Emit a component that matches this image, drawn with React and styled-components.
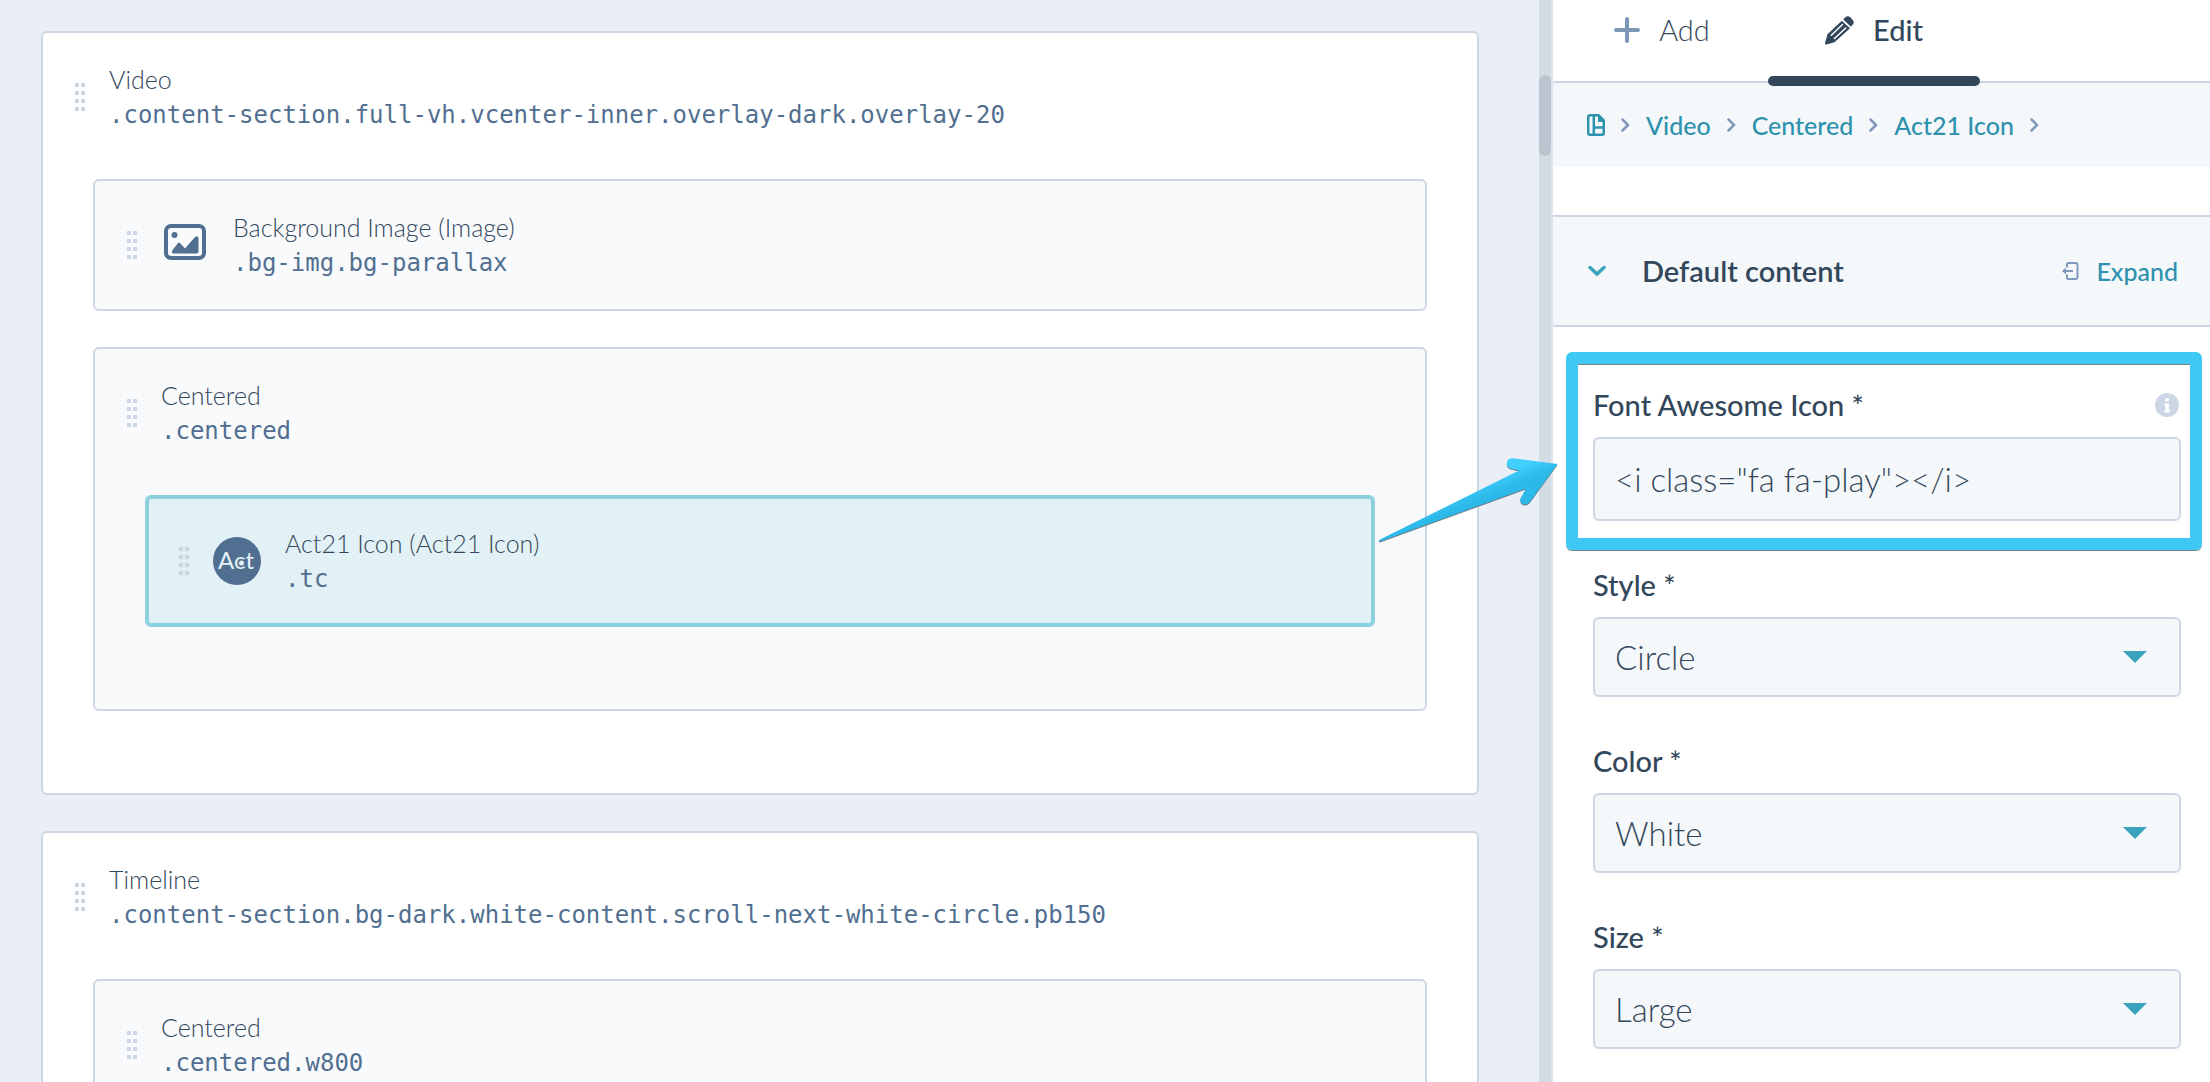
import * as React from 'react';
import styled, { createGlobalStyle } from 'styled-components';

const GlobalStyles = createGlobalStyle`
  * {
    box-sizing: border-box;
  }
  body {
    margin: 0;
    color: #33475b;
    font-family: Lato, 'Open Sans', sans-serif;
    font-size: 25px;
    line-height: 36px;
  }
`;

const PageStyles = styled.div`
  display: grid;
  grid-template-columns: minmax(0, 1fr) 671px;
  height: 100vh;
  overflow: hidden;
  background: #eaeff7;
`;

const Canvas = styled.main`
  display: flex;
  flex-direction: column;
  gap: 36px;
  padding: 31px 60px 31px 41px;
`;

const Card = styled.section`
  flex-shrink: 0;
  border: 2px solid #cdd6e4;
  border-radius: 6px;
  background: ${(p) => (p.$nested ? '#f9fafc' : '#fff')};
`;

const SelectedCard = styled(Card)`
  border-color: #8ad1dd;
  background: #e2f1f5;
  box-shadow: inset 0 0 0 2px #8ad1dd;
`;

const CardHeader = styled.div`
  display: flex;
  align-items: center;
  gap: 24px;
  padding: 28px 32px;
`;

const CardBody = styled.div`
  display: flex;
  flex-direction: column;
  gap: 36px;
  padding: 18px 50px 82px;
`;

const Handle = styled.span`
  display: grid;
  grid-template-columns: 4px 4px;
  grid-auto-rows: 4px;
  gap: 4px 2px;
  cursor: grab;

  i {
    background: #cdd6e4;
  }
`;

const Names = styled.div`
  min-width: 0;

  h2 {
    margin: 0;
    font-size: 25px;
    font-weight: 300;
  }
  code {
    display: block;
    color: #516f90;
    font-family: 'DejaVu Sans Mono', monospace;
    font-size: 24px;
  }
`;

const Sidebar = styled.aside`
  position: relative;
  display: grid;
  grid-template-columns: 14px minmax(0, 1fr);
  background: #fff;
`;

const ScrollTrack = styled.div`
  padding-top: 75px;
  border-right: 2px solid #dee4ee;
  background: #d3dbe3;
`;

const ScrollThumb = styled.div`
  height: 81px;
  border-radius: 6px;
  background: #bcc4cf;
`;

const Tabs = styled.nav`
  display: flex;
  padding-left: 3px;
  border-bottom: 2px solid #cdd6e4;
`;

const Tab = styled.button`
  position: relative;
  display: flex;
  justify-content: center;
  align-items: center;
  gap: 19px;
  width: 212px;
  padding: 12px 0 33px;
  border: 0;
  background: none;
  color: inherit;
  font: inherit;
  font-size: 29px;
  font-weight: ${(p) => (p.$active ? 500 : 300)};

  &::after {
    content: '';
    display: ${(p) => (p.$active ? 'block' : 'none')};
    position: absolute;
    right: 0;
    bottom: -5px;
    left: 0;
    height: 10px;
    border-radius: 5px;
    background: #33475b;
  }
`;

const Breadcrumbs = styled.nav`
  display: flex;
  align-items: center;
  gap: 16px;
  height: 84px;
  padding: 0 34px;
  background: #f5f8fa;
  font-weight: 500;

  a {
    color: #2e91ae;
    text-decoration: none;
  }
  svg {
    display: block;
  }
`;

const SectionHeader = styled.header`
  display: flex;
  align-items: center;
  height: 112px;
  margin-top: 48px;
  padding: 0 32px 0 35px;
  border: solid #cdd6e4;
  border-width: 2px 0;
  background: #f5f8fa;

  h1 {
    flex: 1;
    margin: 0 0 0 36px;
    font-size: 29px;
    font-weight: 600;
  }
`;

const ExpandButton = styled.button`
  display: flex;
  align-items: center;
  gap: 17px;
  padding: 0;
  border: 0;
  background: none;
  color: #2e91ae;
  font: inherit;
  font-weight: 500;
`;

const Fields = styled.form`
  display: flex;
  flex-direction: column;
  gap: 46px;
  padding: 60px 29px 33px 40px;
`;

const Field = styled.div`
  position: relative;
`;

const LabelRow = styled.div`
  display: flex;
  justify-content: space-between;
  align-items: center;
  margin-bottom: 14px;
  padding-right: 2px;
  font-size: 29px;
  font-weight: 500;
`;

const TextInput = styled.input`
  display: block;
  width: 100%;
  height: 84px;
  padding: 0 20px;
  border: 2px solid #cdd6e4;
  border-radius: 6px;
  background: #f5f8fa;
  color: inherit;
  font: inherit;
  font-size: 33px;
  font-weight: 300;
  line-height: 44px;
`;

const SelectWrap = styled.div`
  position: relative;

  svg {
    position: absolute;
    top: 34px;
    right: 34px;
    pointer-events: none;
  }
`;

const Select = styled.select`
  display: block;
  width: 100%;
  height: 80px;
  padding: 0 20px;
  border: 2px solid #cdd6e4;
  border-radius: 6px;
  background: #f5f8fa;
  color: inherit;
  font: inherit;
  font-size: 33px;
  font-weight: 300;
  line-height: 44px;
  appearance: none;
`;

const Highlight = styled.div`
  position: absolute;
  inset: -35px -21px -29px -27px;
  border: 12px solid #40c8f4;
  border-radius: 6px;
  box-shadow: 0 1px 0 #7b8288, inset 0 1px 0 #7b8288;
  pointer-events: none;
`;

const Arrow = styled.svg`
  position: absolute;
  top: 450px;
  left: -164px;
  filter: drop-shadow(0 1px 0 #6d7a84);
  pointer-events: none;
`;

const DragHandle = () => (
  <Handle>
    {Array.from({ length: 8 }, (_, i) => (
      <i key={i} />
    ))}
  </Handle>
);

const ImageIcon = () => (
  <svg width="48" height="48" viewBox="0 0 48 48" fill="#516f90">
    <rect x="5" y="5" width="38" height="32" rx="5" fill="none" stroke="#516f90" strokeWidth="4" />
    <circle cx="13.500" cy="14" r="3" />
    <path d="M11 31.500Q10.500 30 12 28.500L17 22q1-1 2 0l5 5.500L34 16q2.500-2 3.500 1v13q0 2.500-2.500 2.500H12.500Q11.300 32.500 11 31.500z" />
  </svg>
);

const ActIcon = () => (
  <svg width="48" height="48" viewBox="0 0 48 48">
    <circle cx="24" cy="24" r="24" fill="#516f90" />
    <text x="5" y="32" fill="#e2f1f5" fontSize="24">
      Act
    </text>
    <circle cx="28.500" cy="26" r="2.500" fill="#e2f1f5" />
  </svg>
);

const PlusIcon = () => (
  <svg width="26" height="26" viewBox="0 0 26 26" stroke="#7c98b6" strokeWidth="4" strokeLinecap="round">
    <path d="M13 2v22M2 13h22" />
  </svg>
);

const PencilIcon = () => (
  <svg width="29" height="29" viewBox="0 0 29 29" fill="#33475b">
    <path d="M18.200 3.400l2.400-2.300q2.200-1.800 4.400 0l2.800 3q1.800 2.300 0 4.500l-1.900 2.200z" />
    <path d="M16.800 4.700L2.500 18.200 0 27.200q0 1.300 1.300 1.200l8.200-2.200L25 12.300z" />
    <path d="M17.500 8.500L6.300 19.200M20.800 12L9.500 22.500" stroke="#fff" strokeWidth="1.500" strokeLinecap="round" />
  </svg>
);

const PageIcon = () => (
  <svg width="18" height="22" viewBox="0 0 18 22" fill="none" stroke="#2e91ae" strokeWidth="2.500">
    <path d="M3.200 1.200h8.300L16.800 6.500V19q0 1.800-1.800 1.800H3.200q-2 0-2-1.800V3q0-1.800 2-1.800zM6.800 1v20M6.800 13.500H17" />
    <path d="M11 1v7h6.500z" fill="#2e91ae" stroke="none" />
  </svg>
);

const Chevron = () => (
  <svg width="9" height="14" viewBox="0 0 9 14" fill="none" stroke="#8199bc" strokeWidth="2.500" strokeLinecap="round">
    <path d="M1.500 1.500L7 7l-5.500 5.500" />
  </svg>
);

const ChevronDown = () => (
  <svg width="18" height="12" viewBox="0 0 18 12" fill="none" stroke="#3aa3bd" strokeWidth="3.500" strokeLinecap="round">
    <path d="M2 2.500l7 6.500 7-6.500" />
  </svg>
);

const ExpandIcon = () => (
  <svg width="17" height="18" viewBox="0 0 17 18" fill="none" stroke="#8199bc" strokeWidth="2">
    <path d="M5 5.500V2.500Q5 1 6.500 1h7Q15.500 1 15.500 3v12q0 2-2 2h-7Q5 17 5 15.500v-3M11 9H2" />
    <path d="M0 9l4-3.500v7z" fill="#8199bc" stroke="none" />
  </svg>
);

const InfoIcon = () => (
  <svg width="24" height="24" viewBox="0 0 24 24">
    <circle cx="12" cy="12" r="12" fill="#cdd6e4" />
    <path d="M10.300 5h3.600v3.400h-3.600zM9.500 10.500h4.400V17h1v2.500H9.500V17h.9v-4h-.9z" fill="#fff" />
  </svg>
);

const Caret = () => (
  <svg width="24" height="12" viewBox="0 0 24 12" fill="#3aa3bd">
    <path d="M0 0h24L12 12z" />
  </svg>
);

const Header = ({ name, classes, icon }) => (
  <CardHeader>
    <DragHandle />
    {icon}
    <Names>
      <h2>{name}</h2>
      <code>{classes}</code>
    </Names>
  </CardHeader>
);

const SelectField = ({ id, label, value }) => (
  <Field>
    <LabelRow>
      <label htmlFor={id}>{label} *</label>
    </LabelRow>
    <SelectWrap>
      <Select id={id} defaultValue={value}>
        <option>{value}</option>
      </Select>
      <Caret />
    </SelectWrap>
  </Field>
);

export default function App() {
  return (
    <PageStyles>
      <GlobalStyles />
      <Canvas>
        <Card>
          <Header name="Video" classes=".content-section.full-vh.vcenter-inner.overlay-dark.overlay-20" />
          <CardBody>
            <Card $nested>
              <Header name="Background Image (Image)" classes=".bg-img.bg-parallax" icon={<ImageIcon />} />
            </Card>
            <Card $nested>
              <Header name="Centered" classes=".centered" />
              <CardBody>
                <SelectedCard>
                  <Header name="Act21 Icon (Act21 Icon)" classes=".tc" icon={<ActIcon />} />
                </SelectedCard>
              </CardBody>
            </Card>
          </CardBody>
        </Card>
        <Card>
          <Header name="Timeline" classes=".content-section.bg-dark.white-content.scroll-next-white-circle.pb150" />
          <CardBody>
            <Card $nested>
              <Header name="Centered" classes=".centered.w800" />
            </Card>
          </CardBody>
        </Card>
      </Canvas>

      <Sidebar>
        <ScrollTrack>
          <ScrollThumb />
        </ScrollTrack>
        <div>
          <Tabs>
            <Tab type="button">
              <PlusIcon />
              Add
            </Tab>
            <Tab type="button" $active>
              <PencilIcon />
              Edit
            </Tab>
          </Tabs>
          <Breadcrumbs>
            <a href="#page" aria-label="Page">
              <PageIcon />
            </a>
            <Chevron />
            <a href="#video">Video</a>
            <Chevron />
            <a href="#centered">Centered</a>
            <Chevron />
            <a href="#act21-icon">Act21 Icon</a>
            <Chevron />
          </Breadcrumbs>
          <SectionHeader>
            <ChevronDown />
            <h1>Default content</h1>
            <ExpandButton type="button">
              <ExpandIcon />
              Expand
            </ExpandButton>
          </SectionHeader>
          <Fields>
            <Field>
              <LabelRow>
                <label htmlFor="icon">Font Awesome Icon *</label>
                <InfoIcon />
              </LabelRow>
              <TextInput id="icon" type="text" defaultValue={'<i class="fa fa-play"></i>'} />
              <Highlight />
            </Field>
            <SelectField id="style" label="Style" value="Circle" />
            <SelectField id="color" label="Color" value="White" />
            <SelectField id="size" label="Size" value="Large" />
          </Fields>
        </div>
        <Arrow width="190" height="100" viewBox="0 0 190 100">
          <defs>
            <linearGradient id="shaft" gradientUnits="userSpaceOnUse" x1="118" y1="20" x2="130" y2="50">
              <stop offset="0.200" stopColor="#40cfff" />
              <stop offset="0.700" stopColor="#2cb8e8" />
            </linearGradient>
          </defs>
          <path
            fill="url(#shaft)"
            d="M5 89.500L144 20.500 136 18.500Q131 17 132 12.500 133 8 137 8.200L182.500 14 154.500 52.500Q151 56 147 53.500 144 51 146 47.500L151 38.500 5 91.500Q3 90.500 5 89.500z"
          />
        </Arrow>
      </Sidebar>
    </PageStyles>
  );
}
